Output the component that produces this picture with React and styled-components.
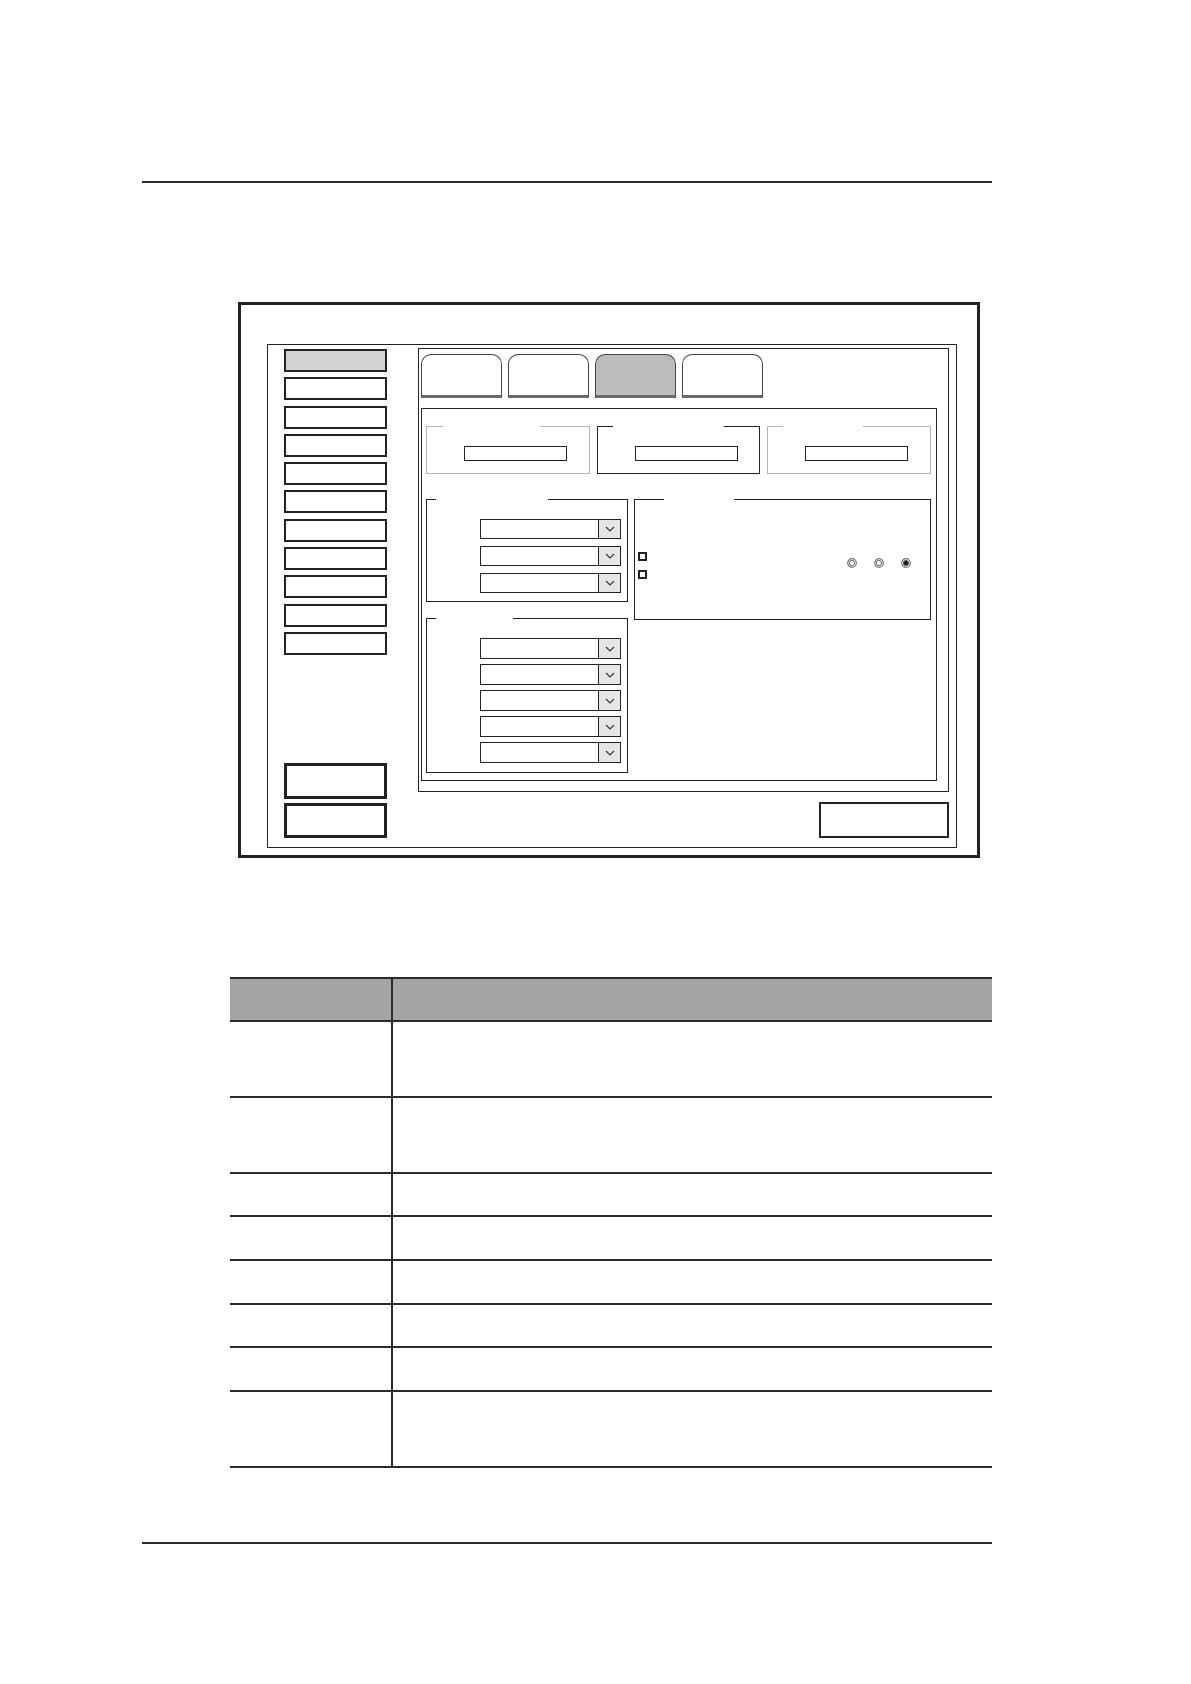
import styled, { createGlobalStyle } from "styled-components";

const Global = createGlobalStyle`
  body {
    margin: 0;
    background: #fff;
    font-family: "Liberation Sans", Arial, sans-serif;
  }
  * { box-sizing: border-box; }
`;

const Page = styled.div`
  width: 1191px;
  height: 1684px;
  display: flex;
  flex-direction: column;
  align-items: flex-start;
`;
const Rule = styled.div`
  height: 2px;
  background: #2b2b2b;
  width: 850px;
  margin-left: 142px;
  margin-top: ${(p) => p.$top}px;
`;

/* ---------- screen mock-up ---------- */
const Frame = styled.div`
  margin: 119px 0 0 238px;
  width: 742px;
  height: 556px;
  border: 3px solid #222;
  padding: 39px 0 0 26px;
`;
const Screen = styled.div`
  width: 690px;
  height: 504px;
  border: 1px solid #222;
  display: flex;
  padding: 3px 7px 9px 16px;
`;
const Sidebar = styled.div`
  width: 103px;
  margin-top: 1px;
  display: flex;
  flex-direction: column;
  justify-content: space-between;
`;
const MenuGroup = styled.div`
  display: flex;
  flex-direction: column;
  gap: ${(p) => p.$gap}px;
`;
const MenuButton = styled.div`
  height: ${(p) => p.$h || 23}px;
  border: ${(p) => p.$bw || 2}px solid #222;
  background: ${(p) => (p.$active ? "#d3d3d3" : "#fff")};
`;
const Main = styled.div`
  width: 531px;
  margin-left: 31px;
  display: flex;
  flex-direction: column;
  gap: 10px;
`;
const Panel = styled.div`
  height: 445px;
  border: 1px solid #222;
  padding: 5px 11px 10px 2px;
  display: flex;
  flex-direction: column;
`;
const Tabs = styled.div`
  display: flex;
  gap: 6px;
`;
const Tab = styled.div`
  width: 81px;
  height: 44px;
  border: 1px solid #444;
  border-bottom: 3px solid #6a6a6a;
  border-radius: 10px 10px 0 0;
  background: ${(p) => (p.$active ? "#bcbcbc" : "#fff")};
`;
const Content = styled.div`
  margin-top: 10px;
  flex: 1;
  border: 1px solid #222;
  padding: 17px 5px 0 4px;
`;
const TopRow = styled.div`
  display: grid;
  grid-template-columns: 164px 163px 164px;
  column-gap: 7px;
`;
const LowerRow = styled.div`
  margin-top: 25px;
  display: grid;
  grid-template-columns: 202px 297px;
  column-gap: 6px;
  align-items: start;
`;
const Column = styled.div`
  display: flex;
  flex-direction: column;
  gap: 16px;
`;
const Group = styled.fieldset`
  margin: 0;
  padding: 0;
  min-width: 0;
  height: ${(p) => p.$h}px;
  border: 1px solid ${(p) => (p.$light ? "#b4b4b4" : "#222")};
`;
const Gap = styled.legend`
  padding: 0;
  height: 0;
  line-height: 0;
  font-size: 0;
  margin-left: ${(p) => p.$at}px;
  width: ${(p) => p.$w}px;
`;
const GroupBody = styled.div`
  padding: ${(p) => p.$pad};
  display: flex;
  flex-direction: ${(p) => (p.$row ? "row" : "column")};
  gap: ${(p) => p.$gap || 0}px;
`;
const Field = styled.div`
  width: 103px;
  height: 15px;
  border: 1px solid #222;
`;
const Select = styled.div`
  width: 141px;
  height: ${(p) => p.$h}px;
  border: 1px solid #222;
  display: flex;
  justify-content: flex-end;
`;
const SelectArrow = styled.div`
  width: 22px;
  background: #e6e6e6;
  border-left: 1px solid #222;
  display: flex;
  align-items: center;
  justify-content: center;
`;
const Checks = styled.div`
  display: flex;
  flex-direction: column;
  gap: 9px;
`;
const Check = styled.div`
  width: 9px;
  height: 9px;
  border: 2px solid #222;
`;
const Radios = styled.div`
  margin: 6px 19px 0 auto;
  display: flex;
  gap: 17px;
`;
const SaveButton = styled.div`
  align-self: flex-end;
  width: 130px;
  height: 36px;
  border: 2px solid #222;
`;

/* ---------- table ---------- */
const Table = styled.div`
  margin: 119px 0 0 230px;
  width: 762px;
  border-top: 2px solid #2b2b2b;
`;
const Row = styled.div`
  display: flex;
  height: ${(p) => p.$h}px;
  border-bottom: 2px solid #2b2b2b;
  background: ${(p) => (p.$head ? "#a6a4a5" : "#fff")};
`;
const KeyCell = styled.div`
  width: 163px;
  border-right: 2px solid #2b2b2b;
`;
const ValueCell = styled.div`
  flex: 1;
`;

const Chevron = () => (
  <svg width="10" height="6" viewBox="0 0 10 6">
    <path d="M1 1l4 4 4-4" fill="none" stroke="#333" strokeWidth="1.1" />
  </svg>
);

const Radio = ({ on }) => (
  <svg width="10" height="10" viewBox="0 0 10 10">
    <circle cx="5" cy="5" r="4.3" fill="#fff" stroke="#777" strokeWidth="1.2" />
    <circle cx="5" cy="5" r="2.6" fill={on ? "#222" : "#fff"} stroke="#555" strokeWidth="0.9" />
  </svg>
);

const Dropdown = ({ h }) => (
  <Select $h={h}>
    <SelectArrow>
      <Chevron />
    </SelectArrow>
  </Select>
);

const topGroups = [
  { light: true, at: 16, w: 97 },
  { light: false, at: 15, w: 111 },
  { light: true, at: 15, w: 80 },
];
const rowHeights = [76, 76, 43, 44, 44, 43, 44, 76];

export default function App() {
  return (
    <Page>
      <Global />
      <Rule $top={181} />
      <Frame>
        <Screen>
          <Sidebar>
            <MenuGroup $gap={5.3}>
              {Array.from({ length: 11 }, (_, i) => (
                <MenuButton key={i} $active={i === 0} />
              ))}
            </MenuGroup>
            <MenuGroup $gap={4}>
              <MenuButton $h={36} $bw={3} />
              <MenuButton $h={35} $bw={3} />
            </MenuGroup>
          </Sidebar>
          <Main>
            <Panel>
              <Tabs>
                <Tab />
                <Tab />
                <Tab $active />
                <Tab />
              </Tabs>
              <Content>
                <TopRow>
                  {topGroups.map((g, i) => (
                    <Group key={i} $h={48} $light={g.light}>
                      <Gap $at={g.at} $w={g.w} />
                      <GroupBody $pad="19px 0 0 37px">
                        <Field />
                      </GroupBody>
                    </Group>
                  ))}
                </TopRow>
                <LowerRow>
                  <Column>
                    <Group $h={103}>
                      <Gap $at={9} $w={112} />
                      <GroupBody $pad="19px 0 0 53px" $gap={7}>
                        {[0, 1, 2].map((i) => (
                          <Dropdown key={i} h={20} />
                        ))}
                      </GroupBody>
                    </Group>
                    <Group $h={155}>
                      <Gap $at={9} $w={77} />
                      <GroupBody $pad="19px 0 0 53px" $gap={5}>
                        {[0, 1, 2, 3, 4].map((i) => (
                          <Dropdown key={i} h={21} />
                        ))}
                      </GroupBody>
                    </Group>
                  </Column>
                  <Group $h={121}>
                    <Gap $at={29} $w={70} />
                    <GroupBody $pad="52px 0 0 3px" $row>
                      <Checks>
                        <Check />
                        <Check />
                      </Checks>
                      <Radios>
                        <Radio />
                        <Radio />
                        <Radio on />
                      </Radios>
                    </GroupBody>
                  </Group>
                </LowerRow>
              </Content>
            </Panel>
            <SaveButton />
          </Main>
        </Screen>
      </Frame>
      <Table>
        <Row $h={43} $head>
          <KeyCell />
          <ValueCell />
        </Row>
        {rowHeights.map((h, i) => (
          <Row key={i} $h={h}>
            <KeyCell />
            <ValueCell />
          </Row>
        ))}
      </Table>
      <Rule $top={74} />
    </Page>
  );
}
